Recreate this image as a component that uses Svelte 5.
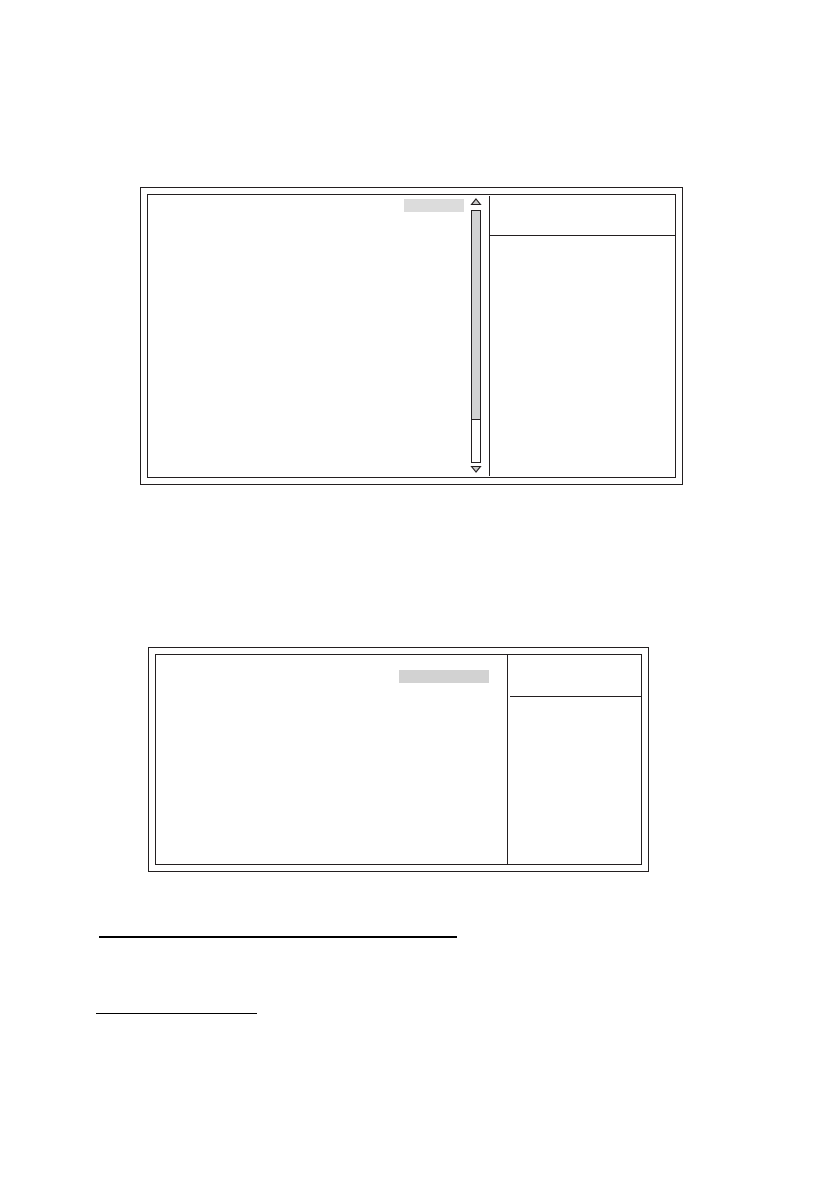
<script>
  let thumb = $state(83.27);
  const scroll = (step) => (thumb = Math.min(100, Math.max(10, thumb + step)));
</script>

<main class="page">
  <section class="frame first">
    <div class="inner">
      <div class="content">
        <span class="field"></span>
        <div class="scroll">
          <button type="button" aria-label="Scroll up" onclick={() => scroll(-5)}>
            <svg width="10" height="8" viewBox="0 0 10 8"><path d="M5 1 9.4 6.5H.6Z" /></svg>
          </button>
          <div class="track"><div class="thumb" style="height: {thumb}%"></div></div>
          <button type="button" aria-label="Scroll down" onclick={() => scroll(5)}>
            <svg width="10" height="8" viewBox="0 0 10 8"><path d="M5 7 .6 1.5h8.8Z" /></svg>
          </button>
        </div>
      </div>
      <aside><header></header></aside>
    </div>
  </section>

  <section class="frame second">
    <div class="inner">
      <div class="content"><span class="field"></span></div>
      <aside><header></header></aside>
    </div>
  </section>

  <hr class="thick" />
  <hr class="thin" />
</main>

<style>
  :global(body) {
    margin: 0;
    background: #fff;
    font-family: "Liberation Sans", Arial, sans-serif;
  }
  .page, .page * {
    box-sizing: border-box;
  }
  .page {
    display: flex;
    flex-direction: column;
    padding: 187px 0 177px;
  }
  .frame {
    display: flex;
    padding: 6px;
    border: 1px solid #231f20;
  }
  .first {
    min-height: 298px;
    margin: 0 156px 162px 140px;
  }
  .second {
    min-height: 225px;
    margin: 0 190px 64px 148px;
  }
  .inner {
    flex: 1;
    display: grid;
    border: 1px solid #231f20;
  }
  .first .inner {
    grid-template-columns: 1fr 186px;
  }
  .second .inner {
    grid-template-columns: 1fr 134px;
  }
  .content {
    display: flex;
    justify-content: flex-end;
  }
  .first .content {
    gap: 7px;
    padding: 3px 8px 4px 0;
  }
  .second .content {
    padding: 15px 18px 0 0;
  }
  .field {
    height: 13px;
  }
  .first .field {
    width: 60px;
    margin-top: 1px;
    background: #dcdcdc;
  }
  .second .field {
    width: 90px;
    background: #d2d2d2;
  }
  .scroll {
    width: 10px;
    display: flex;
    flex-direction: column;
  }
  .scroll button {
    display: block;
    height: 8px;
    padding: 0;
    border: 0;
    background: none;
  }
  .scroll svg {
    display: block;
    overflow: visible;
  }
  .scroll path {
    fill: #c8c8c8;
    stroke: #231f20;
    stroke-width: 1.2;
  }
  .track {
    flex: 1;
    margin: 4px 0 2px;
    border: 1px solid #231f20;
  }
  .thumb {
    background: #d2d2d2;
    border-bottom: 1px solid #231f20;
  }
  aside {
    border-left: 1px solid #231f20;
  }
  header {
    border-bottom: 1px solid #231f20;
  }
  .first aside {
    margin: 1px 0;
  }
  .first header {
    height: 40px;
  }
  .second header {
    height: 42px;
    margin-left: 2px;
  }
  hr {
    border: 0;
    background: #000;
  }
  .thick {
    width: 358px;
    max-width: 80%;
    height: 2px;
    margin: 0 0 75px 99px;
  }
  .thin {
    width: 161px;
    max-width: 80%;
    height: 1px;
    margin: 0 0 0 96px;
  }
</style>
